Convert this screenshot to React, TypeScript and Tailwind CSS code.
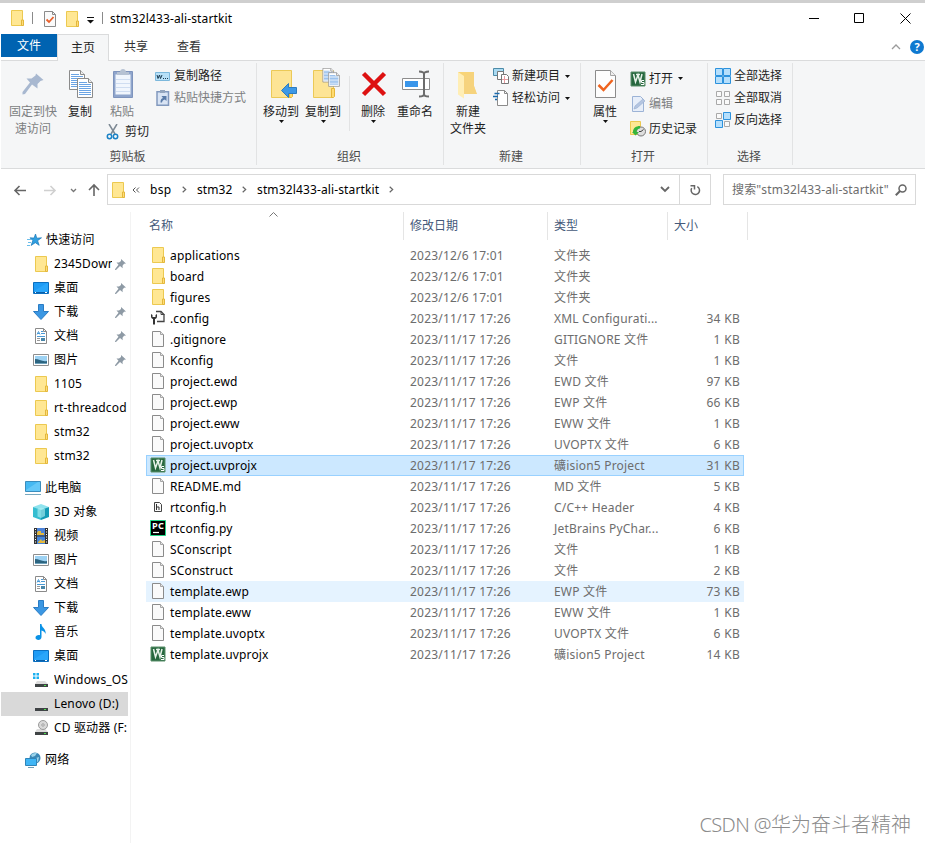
import type { ReactNode } from 'react'

type IconName =
  | 'star' | 'folder' | 'desktop' | 'download' | 'document' | 'picture' | 'pc' | 'cube' | 'video'
  | 'music' | 'windisk' | 'disk' | 'cd' | 'network' | 'file' | 'config' | 'uv' | 'header' | 'pycharm'

interface NavItem {
  label: string
  icon: IconName
  root?: boolean
  pinned?: boolean
  active?: boolean
}

interface FileRow {
  name: string
  icon: IconName
  date: string
  type: string
  size?: string
  state?: 'selected' | 'hover'
}

const quickAccess: NavItem[] = [
  { label: '快速访问', icon: 'star', root: true },
  { label: '2345Down', icon: 'folder', pinned: true },
  { label: '桌面', icon: 'desktop', pinned: true },
  { label: '下载', icon: 'download', pinned: true },
  { label: '文档', icon: 'document', pinned: true },
  { label: '图片', icon: 'picture', pinned: true },
  { label: '1105', icon: 'folder' },
  { label: 'rt-threadcod', icon: 'folder' },
  { label: 'stm32', icon: 'folder' },
  { label: 'stm32', icon: 'folder' },
]

const thisPc: NavItem[] = [
  { label: '此电脑', icon: 'pc', root: true },
  { label: '3D 对象', icon: 'cube' },
  { label: '视频', icon: 'video' },
  { label: '图片', icon: 'picture' },
  { label: '文档', icon: 'document' },
  { label: '下载', icon: 'download' },
  { label: '音乐', icon: 'music' },
  { label: '桌面', icon: 'desktop' },
  { label: 'Windows_OS', icon: 'windisk' },
  { label: 'Lenovo (D:)', icon: 'disk', active: true },
  { label: 'CD 驱动器 (F:', icon: 'cd' },
]

const network: NavItem[] = [{ label: '网络', icon: 'network', root: true }]

const D1 = '2023/12/6 17:01'
const D2 = '2023/11/17 17:26'

const files: FileRow[] = [
  { name: 'applications', icon: 'folder', date: D1, type: '文件夹' },
  { name: 'board', icon: 'folder', date: D1, type: '文件夹' },
  { name: 'figures', icon: 'folder', date: D1, type: '文件夹' },
  { name: '.config', icon: 'config', date: D2, type: 'XML Configurati...', size: '34 KB' },
  { name: '.gitignore', icon: 'file', date: D2, type: 'GITIGNORE 文件', size: '1 KB' },
  { name: 'Kconfig', icon: 'file', date: D2, type: '文件', size: '1 KB' },
  { name: 'project.ewd', icon: 'file', date: D2, type: 'EWD 文件', size: '97 KB' },
  { name: 'project.ewp', icon: 'file', date: D2, type: 'EWP 文件', size: '66 KB' },
  { name: 'project.eww', icon: 'file', date: D2, type: 'EWW 文件', size: '1 KB' },
  { name: 'project.uvoptx', icon: 'file', date: D2, type: 'UVOPTX 文件', size: '6 KB' },
  { name: 'project.uvprojx', icon: 'uv', date: D2, type: '礦ision5 Project', size: '31 KB', state: 'selected' },
  { name: 'README.md', icon: 'file', date: D2, type: 'MD 文件', size: '5 KB' },
  { name: 'rtconfig.h', icon: 'header', date: D2, type: 'C/C++ Header', size: '4 KB' },
  { name: 'rtconfig.py', icon: 'pycharm', date: D2, type: 'JetBrains PyChar...', size: '6 KB' },
  { name: 'SConscript', icon: 'file', date: D2, type: '文件', size: '1 KB' },
  { name: 'SConstruct', icon: 'file', date: D2, type: '文件', size: '2 KB' },
  { name: 'template.ewp', icon: 'file', date: D2, type: 'EWP 文件', size: '73 KB', state: 'hover' },
  { name: 'template.eww', icon: 'file', date: D2, type: 'EWW 文件', size: '1 KB' },
  { name: 'template.uvoptx', icon: 'file', date: D2, type: 'UVOPTX 文件', size: '6 KB' },
  { name: 'template.uvprojx', icon: 'uv', date: D2, type: '礦ision5 Project', size: '14 KB' },
]

function Disk() {
  return (
    <>
      <path d="M4 9h8l3 3H2z" fill="#dcdcdc" />
      <path d="M2 12h13v3H2z" fill="#3f4345" />
      <path d="M11 13h2v1h-2z" fill="#4ee04e" />
    </>
  )
}

const icons: Record<IconName, ReactNode> = {
  star: (
    <>
      <path d="M8.500 2l1.300 4.200 4.700-.4-3.900 2.900 1.600 4.600-3.900-2.600-4.200 2.800 1.700-4.900L3 5.800l4 .3z" fill="#2f9fe0" stroke="#1c78b8" strokeWidth=".7" />
      <path d="M0 7.500h4M1 10.500h3M0 13.500h3" stroke="#6bbdea" />
    </>
  ),
  folder: (
    <>
      <path d="M2.500.5h11v10l.5.5v4.500H2.500z" fill="#ffe793" stroke="#ecc950" />
      <path d="M12.500 15.500v-5.500h2v5.500z" fill="#ffdd78" stroke="#e3b73c" />
    </>
  ),
  desktop: (
    <>
      <path d="M.5 2.500h15v11H.5z" fill="#1f9cf5" stroke="#0b6fc0" />
      <path d="M1 11L14 3h1v10H1z" fill="#35b0ff" opacity=".5" />
      <path d="M1 12.500h14" stroke="#0a5fa8" />
      <path d="M2 12.500h1M12 12.500h2" stroke="#fff" />
    </>
  ),
  download: <path d="M5.500.5h5v7h5L8 15.500.5 7.500h5z" fill="#3b97e3" stroke="#2a7cc4" />,
  document: (
    <>
      <path d="M2.500.5h8l3 3v12h-11z" fill="#fff" stroke="#8a8a8a" />
      <path d="M10.500.5v3h3" fill="none" stroke="#8a8a8a" />
      <path d="M4 6.500l1.500-3 1.500 3M4.500 5.500h2M8 3.500h2M8 5.500h4M4 8.500h8" fill="none" stroke="#4a9ad6" />
      <path d="M4 10.500h3M4 12.500h3" stroke="#999" />
      <path d="M8 10h4v3H8z" fill="#4a86a8" />
    </>
  ),
  picture: (
    <>
      <path d="M.5 2.500h15v11H.5z" fill="#fff" stroke="#8e8e8e" />
      <path d="M2 4h12v8H2z" fill="#9dd2f3" />
      <path d="M2 7c4 0 7 3 12 2v2H2z" fill="#2c6480" />
      <path d="M2 11h12v1H2z" fill="#6fa2bb" />
    </>
  ),
  pc: (
    <>
      <path d="M.5 1.500h15v10H.5z" fill="#46b9f2" stroke="#3b8dbd" />
      <path d="M1 10L13 2h2v9H1z" fill="#8cdcff" opacity=".45" />
      <path d="M0 14.500h16" stroke="#79a8bf" />
    </>
  ),
  cube: (
    <>
      <path d="M0 3l8-3 8 3-8 4z" fill="#8fe3ee" />
      <path d="M0 3l8 3v10l-8-3z" fill="#35bdd0" />
      <path d="M16 3L8 6v10l8-3z" fill="#149bb5" />
      <path d="M4.500 5L8 3.500 12 5v7l-4 2-3.500-1.500z" fill="#b3f0f3" opacity=".6" />
    </>
  ),
  video: (
    <>
      <path d="M1 0h14v16H1z" fill="#333" />
      <path d="M4 0h8v7.500H4z" fill="#4c83d8" />
      <path d="M4 8.500h8V16H4z" fill="#4484da" />
      <path d="M5 3h3v2h3v2H4V5zM5 14l3-3 1 2 3-1v3H5z" fill="#e3b83f" />
      <path d="M2.500 1v15M13.500 1v15" stroke="#fff" strokeDasharray="1 1.500" />
    </>
  ),
  music: <path d="M7 0h1.500c0 4 5 4.500 4 10-.5-2-2-3-4-3.500V13c0 4-6 3.500-6 .8C2.500 11.500 5 10.600 7 11.200z" fill="#0a92e6" />,
  windisk: (
    <>
      <path d="M0 1h2.500v2.500H0zM3.500 1h2.500v2.500H3.500zM0 4.500h2.500V7H0zM3.500 4.500h2.500V7H3.500z" fill="#1bb0f0" />
      <Disk />
    </>
  ),
  disk: <Disk />,
  cd: (
    <>
      <Disk />
      <circle cx="10" cy="5" r="4.500" fill="#d9d9d9" stroke="#9b9b9b" />
      <circle cx="10" cy="5" r="1.200" fill="#fff" stroke="#999" />
    </>
  ),
  network: (
    <>
      <circle cx="10" cy="6" r="5.500" fill="#3b87b5" />
      <path d="M6 3c2-2 4-2 6-2l-2 3-3 1zM11 6l3-1-1 5-2-1z" fill="#9bd3ea" />
      <path d="M.5 6.500h11v7H.5z" fill="#3fb5f5" stroke="#2f84b8" />
      <path d="M3 15.500h6" stroke="#6f9db5" />
    </>
  ),
  file: (
    <>
      <path d="M2.500.5h8l3 3v12h-11z" fill="#fafafa" stroke="#8b8b8b" />
      <path d="M10.500.5v3h3" fill="#e6e6e6" stroke="#a5a5a5" />
    </>
  ),
  config: (
    <>
      <path d="M6 1.500h5l3 3v7H7" fill="#fafafa" stroke="#444" strokeWidth="1.300" />
      <path d="M11 1.500v3h3.500" fill="none" stroke="#444" />
      <path d="M1 4v2.500C1 8 2 9 3 9v5.500h2V9c1 0 2-1 2-2.500V4L5.500 5v2h-3V5z" fill="#333" />
    </>
  ),
  uv: (
    <>
      <path d="M1 1h14v14H1z" fill="#27683f" stroke="#5a8f6b" />
      <path d="M3.500 3l2 8L8 4l2 7 2-8M6 3.500h4" fill="none" stroke="#e8f3ea" strokeWidth="1.500" />
      <path d="M14 9.500h-2.500v2H14v2h-3" fill="none" stroke="#fff" />
    </>
  ),
  header: (
    <>
      <path d="M4.500 3.500h5l2 2v7h-7z" fill="#fafafa" stroke="#444" />
      <path d="M6.500 5v6M6.500 8h2.500v3" fill="none" stroke="#333" />
    </>
  ),
  pycharm: (
    <>
      <path d="M.5.5h15v15H.5z" fill="#000" stroke="#21d789" />
      <text x="2" y="9" fill="#fff" fontSize="8" fontWeight="700" textLength="12" lengthAdjust="spacingAndGlyphs">PC</text>
      <path d="M3 12.500h6" stroke="#fff" strokeWidth="1.200" />
    </>
  ),
}

function Icon({ name, className = '' }: { name: IconName; className?: string }) {
  return (
    <svg className={`size-4 shrink-0 ${className}`} viewBox="0 0 16 16">
      {icons[name]}
    </svg>
  )
}

function Caret({ className = '' }: { className?: string }) {
  return (
    <svg className={`h-[3px] w-[5px] shrink-0 ${className}`} viewBox="0 0 5 3">
      <path d="M0 0h5L2.500 3z" fill="#111" />
    </svg>
  )
}

function PinIcon() {
  return (
    <svg className="size-[11px] shrink-0" viewBox="0 0 11 11">
      <path d="M6 0l5 4.500-2 .3-1.500 2 .2 2.400L5 7 1 11H0l.2-1L3.500 5.700 1.500 3.500l2.500.1 2-1.700z" fill="#8e9aa5" />
    </svg>
  )
}

interface BigProps {
  label: string
  width: string
  caret?: boolean
  muted?: boolean
  children: ReactNode
}

function BigButton({ label, width, caret, muted, children }: BigProps) {
  return (
    <button className={`flex shrink-0 flex-col items-center pt-[7px] ${width} ${muted ? 'text-[#7d7f82]' : 'text-[#1e1e1e]'}`}>
      <svg className="h-8 w-9 shrink-0" viewBox="0 0 36 32">{children}</svg>
      <span className="mt-[3px] whitespace-pre text-center leading-[17px]">{label}</span>
      {caret && <Caret />}
    </button>
  )
}

interface SmallProps {
  label: string
  height?: string
  caret?: boolean
  muted?: boolean
  children: ReactNode
}

function SmallButton({ label, height = 'h-[22px]', caret, muted, children }: SmallProps) {
  return (
    <button className={`flex items-center gap-[3px] whitespace-nowrap ${height} ${muted ? 'text-[#7d7f82]' : 'text-[#1e1e1e]'}`}>
      <svg className="size-4 shrink-0" viewBox="0 0 16 16">{children}</svg>
      <span>{label}</span>
      {caret && <Caret className="ml-0.5" />}
    </button>
  )
}

function Group({ label, width, children }: { label: string; width: string; children: ReactNode }) {
  return (
    <div className={`flex shrink-0 flex-col ${width}`}>
      <div className="flex h-[86px]">{children}</div>
      <div className="flex h-5 items-center justify-center pr-0.5 text-[#4c4c4c]">{label}</div>
    </div>
  )
}

function Divider() {
  return <div className="mt-0.5 h-[102px] w-px shrink-0 bg-[#e2e3e4]" />
}

function Sheet({ x, y }: { x: number; y: number }) {
  return (
    <g transform={`translate(${x} ${y})`}>
      <path d="M.5.5h11l4 4v15H.5z" fill="#fff" stroke="#8b8b8b" />
      <path d="M11.500.5v4h4" fill="#eee" stroke="#8b8b8b" />
      <path d="M2 4.500h8M2 6.500h12M2 8.500h12M2 10.500h12M2 12.500h12M2 14.500h12M2 16.500h12" stroke="#6ba4e4" />
    </g>
  )
}

function BigFolder() {
  return (
    <>
      <path d="M8.500 2.500h20v18l-1 1v8h-19z" fill="#fde495" stroke="#ebc957" />
      <path d="M26.500 29.500v-9h3v8l-1 1z" fill="#ffdb70" stroke="#e5b73b" />
    </>
  )
}

function TitleBar() {
  return (
    <div className="flex h-[30px] items-center pl-2">
      <Icon name="folder" />
      <div className="ml-[7px] h-3 w-px bg-[#8a8a8a]" />
      <svg className="ml-[9px] mt-0.5 size-4" viewBox="0 0 16 16">
        <path d="M2.500.5h8l3 3v12h-11z" fill="#fafafa" stroke="#8b8b8b" />
        <path d="M10.500.5v3h3" fill="none" stroke="#8b8b8b" />
        <path d="M4.500 8.500l2.500 2.500 4.500-5" fill="none" stroke="#e8602c" strokeWidth="1.800" />
      </svg>
      <Icon name="folder" className="mt-0.5 ml-1.5" />
      <svg className="ml-[7px] mt-1 h-[7px] w-[7px]" viewBox="0 0 7 7">
        <path d="M0 .5h7" stroke="#111" />
        <path d="M0 3h7L3.500 6.500z" fill="#111" />
      </svg>
      <div className="ml-2 h-3 w-px bg-[#8a8a8a]" />
      <span className="ml-[7px] pt-0.5 tracking-[0.13px] text-black">stm32l433-ali-startkit</span>
      <div className="ml-auto flex h-full items-center">
        <svg className="h-[11px] w-[102px]" viewBox="0 0 102 11" fill="none" stroke="#000">
          <path d="M0 5.500h10M45.500.5h9v9h-9zM91.500.5l10 10M101.500.5l-10 10" />
        </svg>
      </div>
      <div className="w-[14px]" />
    </div>
  )
}

function Tabs() {
  return (
    <div className="flex h-[28px] border-b border-[#dadbdc] pt-px">
      <div className="flex h-[23px] w-14 items-center justify-center bg-[#0063b1] text-white">文件</div>
      <div className="flex h-[27px] w-[52px] items-center justify-center border border-b-0 border-[#dadbdc] bg-[#f5f6f7] pb-px text-[#222]">主页</div>
      <div className="flex h-[25px] w-[53px] items-center justify-center pl-px text-[#333]">共享</div>
      <div className="flex h-[25px] w-[53px] items-center justify-center pl-px text-[#333]">查看</div>
      <svg className="ml-auto mt-[10px] h-[6px] w-[10px]" viewBox="0 0 10 6">
        <path d="M1 5l4-4 4 4" fill="none" stroke="#9b9b9b" strokeWidth="1.300" />
      </svg>
      <div className="ml-[9px] mt-[6px] mr-px flex size-[14px] items-center justify-center rounded-full bg-[#0f79d0] text-[11px] font-bold text-white">?</div>
    </div>
  )
}

function Ribbon() {
  return (
    <div className="flex h-[108px] border-b border-[#dadbdc] bg-[#f5f6f7]">
      <Group label="剪贴板" width="w-[255px]">
        <BigButton label={'固定到快\n速访问'} width="ml-1 w-14" muted>
          <path d="M21 5.500l7.500 6.500-3 1-3 3v4.500L17 16.500 10 26l-2.500.5v-2.500L15 14.500l-3.500-4h5l4-3z" fill="#a8b8d0" />
        </BigButton>
        <BigButton label="复制" width="w-[38px]">
          <Sheet x={7} y={2} />
          <Sheet x={15} y={10} />
        </BigButton>
        <div className="flex w-[50px] flex-col pl-[3px]">
          <BigButton label="粘贴" width="w-[40px]" muted>
            <path d="M9.500 3.500h19v26h-19z" fill="#8fa5cc" stroke="#7e94bd" />
            <path d="M11.500 6.500h15v20h-15z" fill="#f1f6fd" />
            <path d="M12 11.500h14M12 15.500h14M12 19.500h14M12 23.500h14" stroke="#cfddf1" />
            <path d="M13 7V4h3c0-4 6-4 6 0h3v3z" fill="#b6c2d3" />
          </BigButton>
          <div className="mt-px ml-1">
            <SmallButton label="剪切">
              <path d="M3 0l6 10M11 0L5 10" stroke="#7d8994" strokeWidth="1.500" />
              <circle cx="3.500" cy="12.500" r="2.200" fill="none" stroke="#1b82c6" strokeWidth="1.500" />
              <circle cx="9.500" cy="12.500" r="2.200" fill="none" stroke="#1b82c6" strokeWidth="1.500" />
            </SmallButton>
          </div>
        </div>
        <div className="flex flex-col pt-1 pl-1.5">
          <SmallButton label="复制路径">
            <path d="M.5 4.500h14v8H.5z" fill="#b7e0f8" stroke="#7cb8dc" />
            <path d="M2 7l1 3.500L4.500 7l1 3.500L7 7M8 10.500h1M10 10.500h1M12 10.500h1" fill="none" stroke="#1c3c52" />
          </SmallButton>
          <SmallButton label="粘贴快捷方式" muted>
            <path d="M2 1.800h11.500v13.500H2z" fill="#d9e4f4" stroke="#8299be" strokeWidth="1.500" />
            <path d="M5 0h5v3H5z" fill="#94a5bd" />
            <path d="M5.500 12.500c0-3 1-4 2.500-4.500L6.500 6h5v5L9.800 9.500C8 10 7.500 10.500 7 12.500z" fill="#5a7ba8" />
          </SmallButton>
        </div>
      </Group>
      <Divider />
      <Group label="组织" width="w-[186px]">
        <BigButton label="移动到" width="ml-[3px] w-[42px]" caret>
          <BigFolder />
          <path d="M18.500 22.500l7-7v4h8v6h-8v4z" fill="#3d98e6" stroke="#2d7cc0" />
        </BigButton>
        <BigButton label="复制到" width="w-[42px]" caret>
          <BigFolder />
          <g transform="translate(17.500 0) scale(.72)">
            <Sheet x={0} y={0} />
            <Sheet x={8} y={6} />
          </g>
        </BigButton>
        <div className="ml-[5px] mt-[15px] h-[55px] w-px bg-[#e2e3e4]" />
        <BigButton label="删除" width="ml-0.5 w-[42px]" caret>
          <path d="M8.500 5.500l21 21M29.500 5.500l-21 21" stroke="#dd1111" strokeWidth="4.500" />
        </BigButton>
        <BigButton label="重命名" width="w-[42px]">
          <path d="M5.500 10.500h27v11h-27z" fill="#fff" stroke="#8d8d8d" />
          <path d="M8 13h13v6H8z" fill="#3a96ea" />
          <path d="M22 3.500c3 0 5 .5 5 2.500v20c0 2-2 2.500-5 2.500M32 3.500c-3 0-5 .5-5 2.500v20c0 2 2 2.500 5 2.500" fill="none" stroke="#6c6c6c" strokeWidth="2" />
        </BigButton>
      </Group>
      <Divider />
      <Group label="新建" width="w-[136px]">
        <BigButton label={'新建\n文件夹'} width="ml-[3px] w-[42px]">
          <path d="M8 4h16v14l3 8H8z" fill="#f8d477" />
          <path d="M14 8l10-4v14l2.500 8H14z" fill="#f6d37d" />
          <path d="M8 4l6 4v22.500l-6-4z" fill="#ffeeb5" />
        </BigButton>
        <div className="flex flex-col pt-1 pl-[4px]">
          <SmallButton label="新建项目" caret>
            <path d="M.5.5h10v7H.5z" fill="#a9daf2" stroke="#4c8ba8" />
            <path d="M4.500 3.500h6v8h-6z" fill="#fff" stroke="#777" />
            <path d="M8.500 6.500h5l2 2v7h-7z" fill="#fff" stroke="#777" />
            <path d="M11.500 8v7M9 11.500h6" stroke="#e79ca1" />
          </SmallButton>
          <SmallButton label="轻松访问" caret>
            <path d="M4.500.5h7l3 3v12h-10z" fill="#fff" stroke="#8b8b8b" />
            <path d="M11.500.5v3h3" fill="none" stroke="#8b8b8b" />
            <path d="M1.500 3.500h5M0 6.500h5M2 9.500h2" stroke="#1a6aac" strokeWidth="1.300" />
          </SmallButton>
        </div>
      </Group>
      <Divider />
      <Group label="打开" width="w-[126px]">
        <BigButton label="属性" width="ml-1 w-10" caret>
          <path d="M8.500 2.500h15l5 5v22h-20z" fill="#fdfdfd" stroke="#8b8b8b" />
          <path d="M23.500 2.500v5h5" fill="#eee" stroke="#a5a5a5" />
          <path d="M11.500 17l5 5L25.500 12" fill="none" stroke="#ef641f" strokeWidth="2.500" />
        </BigButton>
        <div className="flex flex-col pl-[5px] pt-[5px]">
          <SmallButton label="打开" height="h-[25px]" caret>{icons.uv}</SmallButton>
          <SmallButton label="编辑" height="h-[25px]" muted>
            <path d="M2.500.5h8l3 3v12h-11z" fill="#e7eef9" stroke="#9cb3d6" />
            <path d="M4 13l1-3 8-7 2 2-8 7z" fill="#b4c5e1" stroke="#95accf" strokeWidth=".6" />
          </SmallButton>
          <SmallButton label="历史记录" height="h-[25px]">
            <path d="M.5.5h10v13H.5z" fill="#ffe793" stroke="#ecc950" />
            <circle cx="11" cy="10.500" r="4.500" fill="#dedede" stroke="#777" />
            <path d="M11 10.500l2.500-2M11 10.500h-2" stroke="#444" />
            <path d="M3 11c0-4 3-6 7-6v2.500c-2 0-3.500 1.500-3.500 3.500H9l-3.500 3.500L2 11z" fill="#36b53c" />
          </SmallButton>
        </div>
      </Group>
      <Divider />
      <Group label="选择" width="w-[84px]">
        <div className="flex flex-col pt-1 pl-[7px]">
          <SmallButton label="全部选择">
            <path d="M.5.5h7v7h-7zM8.500.5h7v7h-7zM.5 8.500h7v7h-7zM8.500 8.500h7v7h-7z" fill="#b5dffc" stroke="#2d92dd" />
          </SmallButton>
          <SmallButton label="全部取消">
            <path d="M1.500 1.500h5v5h-5zM9.500 1.500h5v5h-5zM1.500 9.500h5v5h-5zM9.500 9.500h5v5h-5z" fill="#fafafa" stroke="#a9a9a9" />
          </SmallButton>
          <SmallButton label="反向选择">
            <path d="M1.500 1.500h5v5h-5zM9.500 9.500h5v5h-5z" fill="#fafafa" stroke="#a9a9a9" />
            <path d="M8.500.5h7v7h-7zM.5 8.500h7v7h-7z" fill="#b5dffc" stroke="#2d92dd" />
          </SmallButton>
        </div>
      </Group>
      <Divider />
    </div>
  )
}

function Chevron({ className = '' }: { className?: string }) {
  return (
    <svg className={`h-[7px] w-[5px] shrink-0 ${className}`} viewBox="0 0 5 7">
      <path d="M.7.7l3 2.800-3 2.800" fill="none" stroke="#666" strokeWidth="1.200" />
    </svg>
  )
}

function AddressBar() {
  return (
    <div className="flex h-[41px] items-center">
      <svg className="ml-3 h-4 w-[88px] shrink-0" viewBox="0 0 88 16" fill="none" strokeWidth="1.600">
        <path d="M13 8.500H2M6.500 4L2 8.500 6.500 13" stroke="#666" />
        <path d="M31 8.500h11M37.500 4l4.500 4.500-4.500 4.500" stroke="#d0d0d0" />
        <path d="M58 7l2.500 2.500L63 7" stroke="#777" strokeWidth="1.300" />
        <path d="M81 14V3M76 8l5-5 5 5" stroke="#666" />
      </svg>
      <div className="ml-1.5 flex h-[31px] w-[604px] items-center border border-[#d9d9d9] text-black">
        <Icon name="folder" className="ml-0.5" />
        <svg className="ml-[6px] h-[6px] w-[8px]" viewBox="0 0 8 6">
          <path d="M3.500.5L1 3l2.500 2.500M7 .5L4.500 3 7 5.500" fill="none" stroke="#555" />
        </svg>
        <span className="ml-[10px] w-[23px] tracking-[0.3px]">bsp</span>
        <Chevron className="ml-[9px]" />
        <span className="ml-[10px] w-[36px] tracking-[0.1px]">stm32</span>
        <Chevron className="ml-[9px]" />
        <span className="ml-[10px] w-[123px] whitespace-nowrap tracking-[0.13px]">stm32l433-ali-startkit</span>
        <Chevron className="ml-[9px]" />
        <svg className="ml-auto h-[7px] w-[10px]" viewBox="0 0 10 7">
          <path d="M1 1l4 4 4-4" fill="none" stroke="#666" strokeWidth="1.800" />
        </svg>
        <div className="ml-[9px] flex h-full w-[31px] items-center justify-center border-l border-[#d9d9d9]">
          <svg className="size-3" viewBox="0 0 12 12">
            <path d="M8.300 2.600a4.200 4.200 0 1 1-5.600 1.600M1.500 1.700H5.500V5.500" fill="none" stroke="#666" strokeWidth="1.500" />
          </svg>
        </div>
      </div>
      <div className="ml-3 flex h-[31px] w-[193px] items-center border border-[#d9d9d9] pl-2 text-[#6d6d6d]">
        <span className="whitespace-nowrap tracking-[0.13px]">搜索"stm32l433-ali-startkit"</span>
        <svg className="ml-auto mr-[8px] size-3 shrink-0" viewBox="0 0 12 12">
          <circle cx="7.500" cy="4.500" r="3.500" fill="none" stroke="#666" strokeWidth="1.500" />
          <path d="M5 7L.8 11.200" stroke="#666" strokeWidth="2" />
        </svg>
      </div>
    </div>
  )
}

function NavRow({ item }: { item: NavItem }) {
  return (
    <div className={`flex h-6 w-[127px] shrink-0 items-center overflow-hidden text-black ${item.root ? 'pl-6' : 'pl-8'} ${item.active ? 'bg-[#d9d9d9]' : ''}`}>
      <Icon name={item.icon} className={item.icon === 'star' ? 'ml-0.5' : ''} />
      <span className={`min-w-0 overflow-hidden whitespace-nowrap tracking-[0.15px] ${item.root ? (item.icon === 'star' ? 'ml-[3px]' : 'ml-1') : 'ml-[5px]'} ${item.pinned ? 'w-[58px]' : ''}`}>{item.label}</span>
      {item.pinned && <div className="ml-[3px]"><PinIcon /></div>}
    </div>
  )
}

function Sidebar() {
  return (
    <div className="flex w-[129px] shrink-0 flex-col gap-2 pt-4">
      {[quickAccess, thisPc, network].map((items, i) => (
        <div key={i}>
          {items.map((item, j) => <NavRow key={j} item={item} />)}
        </div>
      ))}
    </div>
  )
}

function FileList() {
  return (
    <div className="flex-1 border-l border-[#f3f3f3]">
      <div className="flex h-7 items-center text-[#44597a]">
        <div className="flex h-full w-[272px] pl-[18px]">
          <span className="w-[120px] pt-[6px]">名称</span>
          <svg className="h-[5px] w-[9px]" viewBox="0 0 9 5">
            <path d="M.5 4.500l4-4 4 4" fill="none" stroke="#777" />
          </svg>
        </div>
        <div className="h-full w-36 border-l border-[#e5e5e5] pl-1.5 pt-[6px]">修改日期</div>
        <div className="h-full w-[120px] border-l border-[#e5e5e5] pl-1.5 pt-[6px]">类型</div>
        <div className="h-full w-[81px] border-x border-[#e5e5e5] pl-1.5 pt-[6px]">大小</div>
      </div>
      <div className="mt-[5px] ml-[15px] w-[598px]">
        {files.map(f => (
          <div
            key={f.name}
            className={`flex h-[21px] items-center whitespace-nowrap tracking-[0.2px] text-[#6d6d6d] ${f.state === 'selected' ? 'bg-[#cce8ff] outline -outline-offset-1 outline-[#99d1ff]' : f.state === 'hover' ? 'bg-[#e5f3ff]' : ''}`}
          >
            <Icon name={f.icon} className="ml-1 mb-px" />
            <span className="ml-1 w-60 tracking-[0.15px] text-black">{f.name}</span>
            <span className="w-36">{f.date}</span>
            <span className="w-[120px]">{f.type}</span>
            <span className="w-[66px] text-right tracking-[0.3px]">{f.size}</span>
          </div>
        ))}
      </div>
    </div>
  )
}

export default function App() {
  return (
    <div className="relative flex h-[843px] w-[925px] flex-col overflow-hidden bg-white pl-px font-['Noto_Sans','Noto_Sans_CJK_SC',sans-serif] text-[12px] leading-4">
      <div className="-ml-px h-[3px] shrink-0 bg-[#cfcfcf]" />
      <TitleBar />
      <Tabs />
      <Ribbon />
      <AddressBar />
      <div className="flex flex-1 pt-0.5">
        <Sidebar />
        <FileList />
      </div>
      <div className="absolute right-[14px] bottom-[5px] text-[20px] leading-[26px] font-light text-[#8c8c8c]">
        <span className="tracking-[-0.6px]">CSDN @</span>华为奋斗者精神
      </div>
    </div>
  )
}
